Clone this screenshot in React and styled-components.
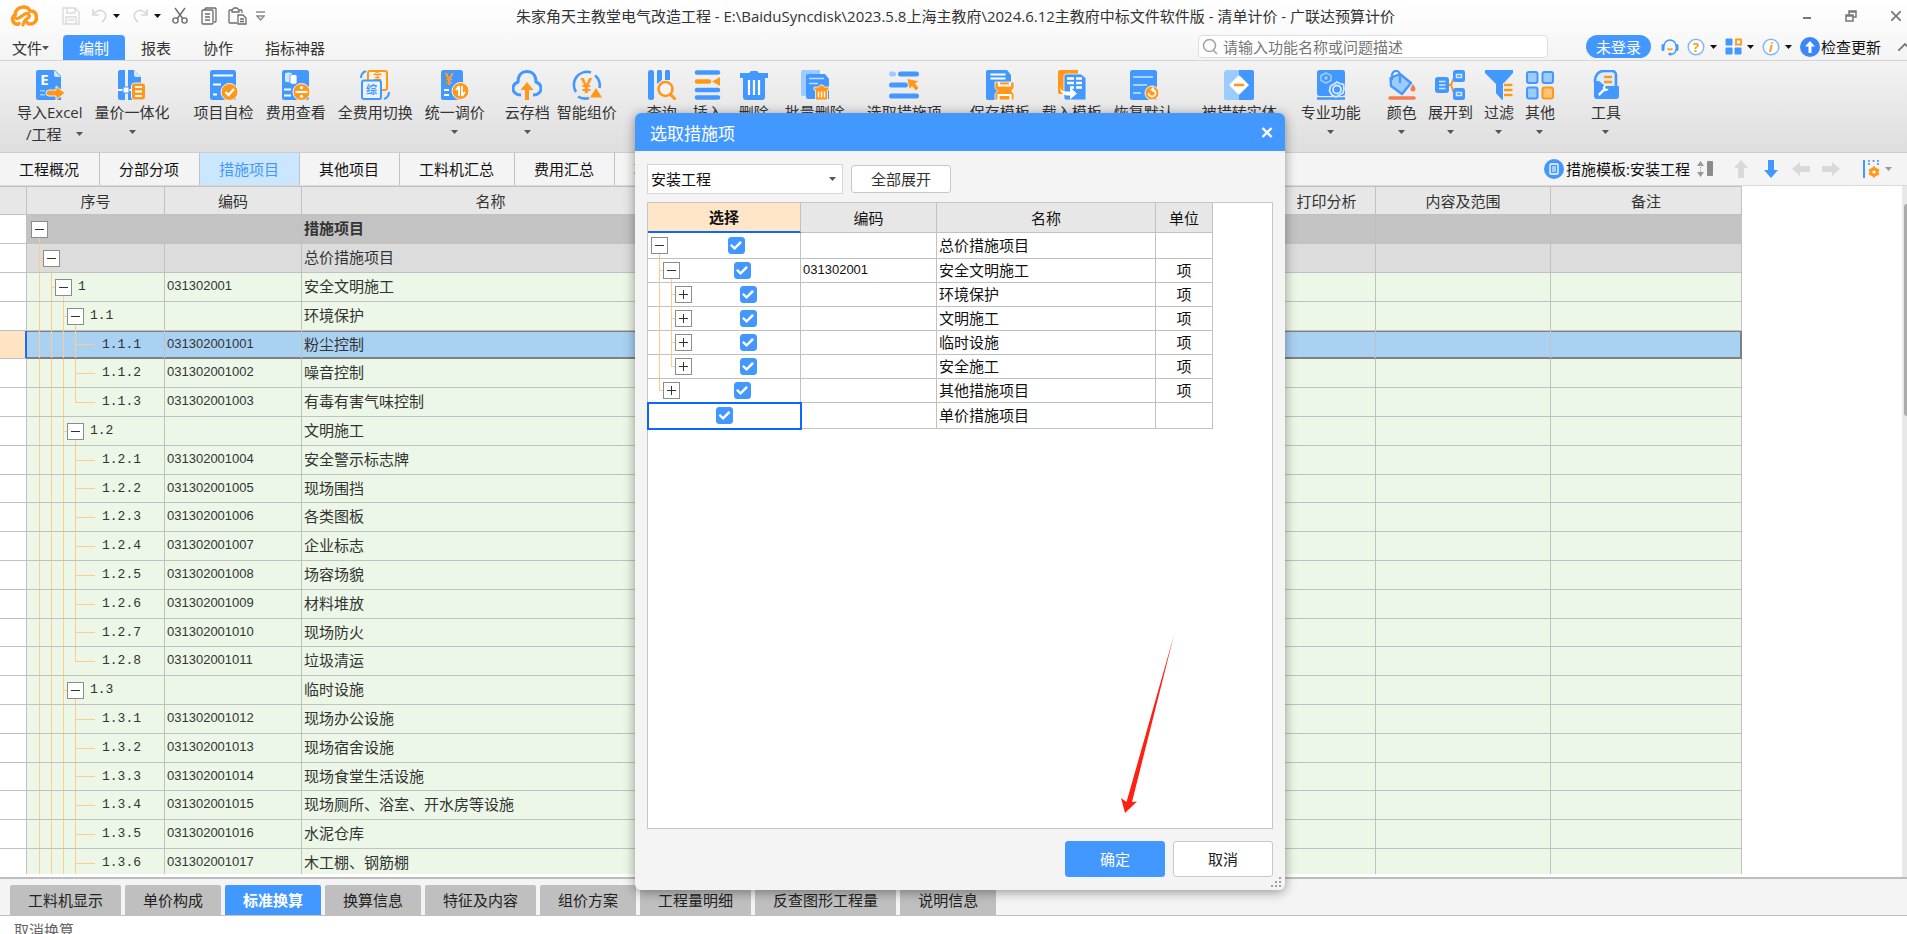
import React, { useState } from "react";
import styled, { createGlobalStyle, css } from "styled-components";

const BLUE = "#4398ff";
const ORANGE = "#ff981a";
const PALE = "#9ccbff";
const GUIDE = "#ffcb8f";
const LINE = "#c1c1c1";

// ribbon icons, all drawn on a 30 x 30 board
const icons = {
  excel: (
    <>
      <path d="M3 0h17l6 6v24H3a2 2 0 0 1-2-2V2a2 2 0 0 1 2-2z" fill={BLUE} />
      <path d="M19 0l7 7h-5a2 2 0 0 1-2-2z" fill="#d3e8ff" />
      <text x="9.500" y="15" fontSize="15" fontWeight="700" textAnchor="middle" fill="#fff">E</text>
      <path d="M5 20h5v1.500H5zM5 24h5v1.500H5z" fill={PALE} />
      <path d="M14 20h7v-4l9 7-9 7v-4h-7a3 3 0 0 1 0-6z" fill={ORANGE} stroke="#eee" strokeWidth="1" />
    </>
  ),
  quantity: (
    <>
      <path d="M3 0h5v30H3a2 2 0 0 1-2-2V2a2 2 0 0 1 2-2zM11 0h6l7 7v23H11z" fill={BLUE} />
      <path d="M17 0l7 7h-5a2 2 0 0 1-2-2z" fill="#d3e8ff" />
      <path d="M0 19h14v2H0z" fill="#fff" />
      <path d="M6 17h6v6H6z" fill="#fff" stroke={BLUE} strokeWidth="1" />
      <rect x="14.500" y="13" width="14" height="17" rx="3" fill={ORANGE} stroke="#eee" />
      <path d="M18 17h7M18 21.500h7M18 26h7" stroke="#fff" strokeWidth="1.800" />
    </>
  ),
  check: (
    <>
      <rect x="1" y="0" width="26" height="30" rx="2.500" fill={BLUE} />
      <path d="M4 5.500h20M4 14.500h8M4 24.500h4" stroke="#fff" strokeWidth="2.200" />
      <circle cx="20.500" cy="22" r="8.500" fill={ORANGE} stroke="#f5f5f5" />
      <path d="M16.500 22l3 3 5.500-6" stroke="#fff" strokeWidth="2.400" fill="none" />
    </>
  ),
  fee: (
    <>
      <rect x="1" y="0" width="27" height="30" rx="2.500" fill={BLUE} />
      <path d="M4 3.500c2-1.500 5-1.500 7 0v8c-2 1-5 1-7 0z" fill="#d3e8ff" />
      <path d="M9 5.500c2-1.500 5-1.500 7 0v8c-2 1-5 1-7 0z" fill="#fff" stroke={BLUE} strokeWidth=".8" />
      <path d="M3 19.500h7M3 25.500h7" stroke="#fff" strokeWidth="2.200" />
      <circle cx="20.500" cy="22" r="8.500" fill={ORANGE} stroke="#f5f5f5" />
      <path d="M14.500 22h12" stroke="#fff" strokeWidth="2.200" />
      <circle cx="20.500" cy="17.600" r="1.600" fill="#fff" />
      <circle cx="20.500" cy="26.400" r="1.600" fill="#fff" />
    </>
  ),
  switch: (
    <>
      <rect x="8" y="1" width="19" height="19" rx="2" fill="#fff3e2" stroke={ORANGE} strokeWidth="2" />
      <text x="17.500" y="8.500" fontSize="9" fontWeight="700" textAnchor="middle" fill={ORANGE}>全</text>
      <path d="M1 8c0-4 2-6 5-7M29 22c0 4-2 6-5 7" stroke={BLUE} strokeWidth="2" fill="none" />
      <rect x="2" y="10.500" width="19" height="18.500" rx="2" fill="#e9f4ff" stroke={BLUE} strokeWidth="2" />
      <text x="11.500" y="24" fontSize="11" fontWeight="700" textAnchor="middle" fill={BLUE}>综</text>
    </>
  ),
  price: (
    <>
      <rect x="1" y="0" width="22" height="30" rx="2.500" fill={BLUE} />
      <text x="8.500" y="15" fontSize="16" fontWeight="700" textAnchor="middle" fill={ORANGE}>¥</text>
      <path d="M4 20h5M4 25h5" stroke="#fff" strokeWidth="2" />
      <circle cx="20.500" cy="21" r="8.500" fill={ORANGE} stroke="#f5f5f5" />
      <path d="M19 16v10M19 16l-3 4M22 26V16M22 26l3-4" stroke="#fff" strokeWidth="2" fill="none" />
    </>
  ),
  cloud: (
    <>
      <path d="M9 25C4 25 1 22 1 18.500S3.500 13 6 12C6 5 10 1.500 15 1.500S24 5 24 12c2.500 1 5 3 5 6.500S26 25 21 25" fill="none" stroke={BLUE} strokeWidth="3" />
      <path d="M15 12l6.500 8H17v10h-4V20H8.500z" fill={ORANGE} />
    </>
  ),
  smart: (
    <>
      <path d="M4 22A13 13 0 0 1 19 2.500M23 5.500A13 13 0 0 1 27.500 18M6 26.500A13 13 0 0 0 17 28" fill="none" stroke={BLUE} strokeWidth="2.600" />
      <text x="14.500" y="22.500" fontSize="21" fontWeight="700" textAnchor="middle" fill={ORANGE}>¥</text>
      <path d="M24 18l6 9.500H18z" fill={ORANGE} />
    </>
  ),
  query: (
    <>
      <rect x="1" y="0" width="6" height="30" rx="2.500" fill={BLUE} />
      <path d="M10 2a2 2 0 0 1 5 0v8l-5 4zM18 2a2 2 0 0 1 5 0v8h-5z" fill={BLUE} />
      <circle cx="18.500" cy="19" r="7" fill="#f3f3f3" stroke={ORANGE} strokeWidth="2.600" />
      <path d="M23.500 24.500l5 5" stroke={ORANGE} strokeWidth="3" />
    </>
  ),
  insert: (
    <>
      <path d="M4 2.500h21M4 20h21M4 27.500h21" stroke={BLUE} strokeWidth="4.600" strokeLinecap="round" />
      <path d="M4 11.500h12" stroke={ORANGE} strokeWidth="4.600" strokeLinecap="round" />
      <path d="M27 7v9l-8-4.500z" fill={ORANGE} />
    </>
  ),
  trash: (
    <>
      <path d="M1 3h9l2-2h6l2 2h9v5H1z" fill={BLUE} />
      <path d="M4 8h22v19a3 3 0 0 1-3 3H7a3 3 0 0 1-3-3z" fill={BLUE} />
      <path d="M10 10v15M15 10v15M20 10v15" stroke="#fff" strokeWidth="2.200" />
    </>
  ),
  batch: (
    <>
      <path d="M2 0h18v26H2a2 2 0 0 1-1-2V2z" fill={PALE} />
      <path d="M8 4h17l4 5v20H8a2 2 0 0 1-2-2V6a2 2 0 0 1 2-2z" fill={BLUE} />
      <path d="M9 8.500h15M9 13.500h9" stroke="#bfddff" strokeWidth="1.600" />
      <path d="M14 17h5l1-2h3l1 2h5v3h-1.500v10h-12V20H14z" fill={ORANGE} stroke="#f5f5f5" strokeWidth=".8" />
      <path d="M18.500 21.500v6M21.500 21.500v6M24.500 21.500v6" stroke="#fff" strokeWidth="1.400" />
    </>
  ),
  pick: (
    <>
      <path d="M2.500 4h2" stroke={PALE} strokeWidth="5" strokeLinecap="round" />
      <path d="M11.500 4h16M2.500 15h14M2.500 26h25" stroke={BLUE} strokeWidth="5" strokeLinecap="round" />
      <path d="M18 8.500l12 2.500-3.500 2.500 3.500 4.500-3 3-4-4.500-2.500 3.500z" fill={ORANGE} stroke="#eee" strokeWidth=".8" />
    </>
  ),
  saveTpl: (
    <>
      <path d="M3 0h19l4 5v25H3a2 2 0 0 1-2-2V2a2 2 0 0 1 2-2z" fill={BLUE} />
      <path d="M5.500 4.500h15M5.500 8.500h15" stroke="#fff" strokeWidth="1.800" />
      <path d="M10 12h19v6l-2.500 3 2.500 3v6H10v-6l2.500-3-2.500-3z" fill={ORANGE} stroke="#f5f5f5" strokeWidth=".8" />
      <path d="M14 12v3.500h11V12M13.500 30v-5h12v5" stroke="#fff" strokeWidth="2.200" fill="none" />
    </>
  ),
  loadTpl: (
    <>
      <path d="M3 0h18v24H3a2 2 0 0 1-2-2V2a2 2 0 0 1 2-2z" fill={ORANGE} />
      <path d="M9 4h15l5 4v22H9a2 2 0 0 1-2-2V6a2 2 0 0 1 2-2z" fill={BLUE} stroke="#f5f5f5" strokeWidth=".8" />
      <path d="M10 8.500h7M19 8.500h6M10 13h7M19 13h6M13 17.500h4M19 17.500h6" stroke="#fff" strokeWidth="2.400" />
      <path d="M3 17c1 4 4 5 10 4.500v-4l7 6-7 6v-4C7 26 3 23 3 17z" fill="#fff" />
    </>
  ),
  restore: (
    <>
      <rect x="1" y="0" width="27" height="30" rx="2.500" fill={BLUE} />
      <path d="M4 7h20M4 15h14M4 23h8" stroke="#a9d2ff" strokeWidth="2.200" />
      <circle cx="23" cy="23" r="7" fill={ORANGE} stroke="#f5f5f5" />
      <path d="M19.500 23a3.500 3.500 0 1 0 3.500-3.500l1.500-2M23 19.500l2 2" stroke="#fff" strokeWidth="1.800" fill="none" />
    </>
  ),
  convert: (
    <>
      <path d="M2 0h13v30H2a2 2 0 0 1-2-2V2z" fill={PALE} />
      <path d="M15 0h13a2 2 0 0 1 2 2v26a2 2 0 0 1-2 2H15z" fill={BLUE} />
      <path d="M5 15l9-9a1.500 1.500 0 0 1 2 0l9 9-9 9a1.500 1.500 0 0 1-2 0z" fill="#fff" />
      <path d="M10 15h10" stroke={ORANGE} strokeWidth="2.600" />
    </>
  ),
  pro: (
    <>
      <rect x="1" y="0" width="28" height="26" rx="2.500" fill={BLUE} />
      <path d="M1 28.500h28" stroke={BLUE} strokeWidth="2.600" />
      <path d="M10 3l5 2.500v5L10 13l-5-2.500v-5z" fill="none" stroke={PALE} strokeWidth="1.600" />
      <circle cx="10" cy="8" r="1.800" fill={PALE} />
      <path d="M21 12l3 1.500 3.500 1 .5 4.500-1 4-3.500 2L20 27l-4-2-2.500-4 1-5 3.500-2z" fill={BLUE} stroke="#d6eaff" strokeWidth="1.800" />
      <circle cx="21" cy="19.500" r="4" fill="none" stroke="#d6eaff" strokeWidth="1.800" />
    </>
  ),
  color: (
    <>
      <path d="M13 4l11 9-9 11L4 16l-.5-8z" fill={PALE} stroke={BLUE} strokeWidth="2.400" strokeLinejoin="round" />
      <path d="M5 10V5a4 4 0 0 1 8 0v8" fill="none" stroke={BLUE} strokeWidth="2.200" />
      <path d="M26 14c2 3 2.500 4 2.500 5a2.500 2.500 0 0 1-5 0c0-1 .5-2 2.500-5z" fill="#f67c52" />
      <path d="M3 28h24" stroke="#f67c52" strokeWidth="3.600" strokeLinecap="round" />
    </>
  ),
  expand: (
    <>
      <path d="M13 15h3l3-7h3M16 15l3 8h3" fill="none" stroke={ORANGE} strokeWidth="2" />
      <rect x="0" y="7" width="14" height="16" rx="3" fill={BLUE} />
      <rect x="18" y="0" width="12" height="12" rx="2.500" fill={BLUE} />
      <rect x="18" y="18" width="12" height="12" rx="2.500" fill={BLUE} />
      <path d="M4 11.500h6.500M4 15h6.500M4 18.500h6.500M21.500 4.500h5v3h-5zM21.500 22.500h5v3h-5z" stroke="#cfe6ff" strokeWidth="1.500" fill="none" />
    </>
  ),
  filter: (
    <>
      <path d="M1 0h28v3L19 14v16l-7-7v-9L1 3z" fill={BLUE} />
      <path d="M19 13h10v14H19z" fill="#f0f0f0" />
      <path d="M20 15h8.500M20 20h8.500M20 25h8.500" stroke={ORANGE} strokeWidth="2.400" />
      <path d="M12 13h6v17l-6-7z" fill={BLUE} />
    </>
  ),
  other: (
    <>
      <rect x="2" y="2" width="10.500" height="11" rx="2" fill={PALE} stroke={BLUE} strokeWidth="2" />
      <rect x="17.500" y="2" width="10.500" height="11" rx="2" fill={PALE} stroke={BLUE} strokeWidth="2" />
      <rect x="2" y="17.500" width="10.500" height="11" rx="2" fill={PALE} stroke={BLUE} strokeWidth="2" />
      <rect x="17.500" y="17.500" width="10.500" height="11" rx="2" fill="#ffc57a" stroke={ORANGE} strokeWidth="2" />
    </>
  ),
  tools: (
    <>
      <path d="M4 12v-2C5 3 9 1 13 1h8a4 4 0 0 1 4 4v12" fill="#dcedff" stroke={BLUE} strokeWidth="2.600" />
      <path d="M13 7h8M13 12h8" stroke={ORANGE} strokeWidth="2.600" />
      <path d="M3 11h5l6 5h14v10a3 3 0 0 1-3 3H6a3 3 0 0 1-3-3z" fill={BLUE} />
      <path d="M7 24l5-5a3 3 0 0 1 3-4l-1 2.500 1.500 1.500 2-.5a3 3 0 0 1-4 2.500l-5 5z" fill="#fff" />
    </>
  ),
};

const ribbon = [
  { lead: 0, gap: 12, items: [["导入Excel", "excel", "/工程"], ["量价一体化", "quantity", true]] },
  {
    lead: 24,
    gap: 12,
    items: [["项目自检", "check"], ["费用查看", "fee"], ["全费用切换", "switch"], ["统一调价", "price", true]],
  },
  { lead: 20, gap: 7, items: [["云存档", "cloud", true], ["智能组价", "smart"]] },
  {
    lead: 30,
    gap: 16,
    items: [["查询", "query"], ["插入", "insert"], ["删除", "trash"], ["批量删除", "batch"]],
  },
  { lead: 22, gap: 12, items: [["选取措施项", "pick"]] },
  { lead: 28, gap: 12, items: [["保存模板", "saveTpl"], ["载入模板", "loadTpl"], ["恢复默认", "restore"]] },
  { lead: 28, gap: 12, items: [["被措转实体", "convert"]] },
  { lead: 24, gap: 12, items: [["专业功能", "pro", true]] },
  {
    lead: 26,
    gap: 11,
    items: [["颜色", "color", true], ["展开到", "expand", true], ["过滤", "filter", true], ["其他", "other", true]],
  },
  { lead: 36, gap: 12, items: [["工具", "tools", true]] },
];

const columns = [
  ["", 27],
  ["序号", 138],
  ["编码", 137],
  ["名称", 378],
  ["单位", 60],
  ["项目特征", 178],
  ["工程量", 90],
  ["综合单价", 90],
  ["综合合价", 90],
  ["取费专业", 90],
  ["打印分析", 98],
  ["内容及范围", 175],
  ["备注", 191],
];

const rows = [
  { level: 0, no: "", code: "", name: "措施项目", tone: "root" },
  { level: 1, no: "", code: "", name: "总价措施项目", tone: "group" },
  { level: 2, no: "1", code: "031302001", name: "安全文明施工" },
  { level: 3, no: "1.1", code: "", name: "环境保护" },
  { level: 4, no: "1.1.1", code: "031302001001", name: "粉尘控制", tone: "selected" },
  { level: 4, no: "1.1.2", code: "031302001002", name: "噪音控制" },
  { level: 4, no: "1.1.3", code: "031302001003", name: "有毒有害气味控制", last: true },
  { level: 3, no: "1.2", code: "", name: "文明施工" },
  { level: 4, no: "1.2.1", code: "031302001004", name: "安全警示标志牌" },
  { level: 4, no: "1.2.2", code: "031302001005", name: "现场围挡" },
  { level: 4, no: "1.2.3", code: "031302001006", name: "各类图板" },
  { level: 4, no: "1.2.4", code: "031302001007", name: "企业标志" },
  { level: 4, no: "1.2.5", code: "031302001008", name: "场容场貌" },
  { level: 4, no: "1.2.6", code: "031302001009", name: "材料堆放" },
  { level: 4, no: "1.2.7", code: "031302001010", name: "现场防火" },
  { level: 4, no: "1.2.8", code: "031302001011", name: "垃圾清运", last: true },
  { level: 3, no: "1.3", code: "", name: "临时设施" },
  { level: 4, no: "1.3.1", code: "031302001012", name: "现场办公设施" },
  { level: 4, no: "1.3.2", code: "031302001013", name: "现场宿舍设施" },
  { level: 4, no: "1.3.3", code: "031302001014", name: "现场食堂生活设施" },
  { level: 4, no: "1.3.4", code: "031302001015", name: "现场厕所、浴室、开水房等设施" },
  { level: 4, no: "1.3.5", code: "031302001016", name: "水泥仓库" },
  { level: 4, no: "1.3.6", code: "031302001017", name: "木工棚、钢筋棚" },
];

const measures = [
  { guides: [], open: true, name: "总价措施项目", unit: "", tall: true },
  { guides: ["tee"], open: true, code: "031302001", name: "安全文明施工", unit: "项" },
  { guides: ["pass", "tee"], name: "环境保护", unit: "项" },
  { guides: ["pass", "tee"], name: "文明施工", unit: "项" },
  { guides: ["pass", "tee"], name: "临时设施", unit: "项" },
  { guides: ["pass", "elbow"], name: "安全施工", unit: "项" },
  { guides: ["elbow"], name: "其他措施项目", unit: "项" },
  { leaf: true, name: "单价措施项目", unit: "", tall: true },
];

const pageTabs = ["工程概况", "分部分项", "措施项目", "其他项目", "工料机汇总", "费用汇总", "项目自检"];
const detailTabs = [
  "工料机显示",
  "单价构成",
  "标准换算",
  "换算信息",
  "特征及内容",
  "组价方案",
  "工程量明细",
  "反查图形工程量",
  "说明信息",
];

const Caret = ({ color = "#555" }) => (
  <svg width="7" height="4" viewBox="0 0 7 4" aria-hidden="true">
    <path d="M0 0h7L3.500 4z" fill={color} />
  </svg>
);

const guidesFor = (row) =>
  Array.from({ length: row.level }, (_, i) => {
    if (i < row.level - 1) return "pass";
    return row.last ? "elbow" : "tee";
  });

const QuickAccess = () => (
  <Quick>
    <svg width="28" height="22" viewBox="0 0 28 22" aria-label="广联达">
      <path
        d="M9 18.500c-1 1-2 1-3 .5A5 5 0 0 1 5 10C5.500 5 9 2 13.500 2c3.500 0 5.500 1.500 6.500 4 4-.5 6.500 2.500 6.500 6.500 0 4-3 6.500-6.500 6.500-1.500 0-2.500-.5-3-1.500"
        fill="none"
        stroke={ORANGE}
        strokeWidth="3.600"
        strokeLinecap="round"
      />
      <path d="M6 13.500c4 1 7-4.500 10-5 3-.5 4.500 2.500 2 4.500-2.500 1.500-4 2-5 7" fill="none" stroke={ORANGE} strokeWidth="3.200" strokeLinecap="round" />
    </svg>
    <QuickButton $lead={24} aria-label="保存">
      <svg width="18" height="18" viewBox="0 0 18 18" fill="none" stroke="#dadada" strokeWidth="1.400">
        <path d="M1 1h12l4 4v12H1zM5 1v5h8V1M4 17v-7h10v7M6 13h6" />
      </svg>
    </QuickButton>
    <QuickButton $lead={12} aria-label="撤销">
      <svg width="15" height="15" viewBox="0 0 15 15" fill="none" stroke="#d8d8d8" strokeWidth="1.600">
        <path d="M1 1v6h6M1 7c3-5 8-6 11-3s2 7-2 10" />
      </svg>
      <Caret color="#111" />
    </QuickButton>
    <QuickButton $lead={13} aria-label="重做">
      <svg width="15" height="15" viewBox="0 0 15 15" fill="none" stroke="#d8d8d8" strokeWidth="1.600">
        <path d="M14 1v6H8M14 7c-3-5-8-6-11-3s-2 7 2 10" />
      </svg>
      <Caret color="#111" />
    </QuickButton>
    <QuickButton $lead={11} aria-label="剪切">
      <svg width="16" height="17" viewBox="0 0 16 17" fill="none" stroke="#6c6c6c" strokeWidth="1.400">
        <path d="M3 1l8 11M13 1L5 12" />
        <circle cx="3.500" cy="13.500" r="2.600" />
        <circle cx="12.500" cy="13.500" r="2.600" />
      </svg>
    </QuickButton>
    <QuickButton $lead={13} aria-label="复制">
      <svg width="16" height="18" viewBox="0 0 16 18" fill="none" stroke="#6c6c6c" strokeWidth="1.300">
        <path d="M4 3V2a1 1 0 0 1 1-1h9a1 1 0 0 1 1 1v12a1 1 0 0 1-1 1h-1" />
        <rect x="1" y="3" width="11" height="14" rx="1" />
        <path d="M4 7h5M4 10h5M4 13h5" />
      </svg>
    </QuickButton>
    <QuickButton $lead={11} aria-label="粘贴">
      <svg width="19" height="18" viewBox="0 0 19 18" fill="none" stroke="#6c6c6c" strokeWidth="1.300">
        <path d="M9 16H2a1 1 0 0 1-1-1V4a1 1 0 0 1 1-1h2M11 3h2a1 1 0 0 1 1 1v2M4 5V3l2-2h3l2 2v2z" />
        <path d="M10 8h5l3 3v6h-8zM12 12h4M12 14.500h4" />
      </svg>
    </QuickButton>
    <QuickButton $lead={9} aria-label="自定义快速访问">
      <svg width="9" height="10" viewBox="0 0 9 10" fill="none" stroke="#8a8a8a" strokeWidth="1.400">
        <path d="M0 1h9M1 5h7L4.500 9z" />
      </svg>
    </QuickButton>
  </Quick>
);

const HeaderTools = () => (
  <Tools>
    <Search>
      <svg width="17" height="17" viewBox="0 0 17 17" fill="none" stroke="#a5a5a5" strokeWidth="1.600">
        <circle cx="7.500" cy="7.500" r="6" />
        <path d="M11.500 12.500l3.500 3.500" />
      </svg>
      <SearchInput aria-label="功能搜索" placeholder="请输入功能名称或问题描述" />
    </Search>
    <Login>未登录</Login>
    <ToolButton aria-label="客服">
      <svg width="18" height="18" viewBox="0 0 18 18" fill="none">
        <path d="M3 8a6 6 0 0 1 12 0M15 11c0 3-2 5-5 5.500" stroke={BLUE} strokeWidth="1.400" />
        <path d="M2 7.500v4M16 7.500v4" stroke={BLUE} strokeWidth="3" strokeLinecap="round" />
        <path d="M6.500 10.500c1 1.500 4 1.500 5 0" stroke={ORANGE} strokeWidth="1.600" />
        <circle cx="9" cy="16" r="1.600" fill={BLUE} />
      </svg>
    </ToolButton>
    <ToolButton aria-label="帮助">
      <svg width="18" height="18" viewBox="0 0 18 18">
        <circle cx="9" cy="9" r="7.800" fill="#fff" stroke="#7fb8ff" strokeWidth="1.500" />
        <text x="9" y="14" textAnchor="middle" fontSize="13" fontWeight="700" fill={ORANGE}>?</text>
      </svg>
      <Caret color="#111" />
    </ToolButton>
    <ToolButton aria-label="应用">
      <svg width="17" height="17" viewBox="0 0 17 17">
        <path d="M1 1h6v6H1zM1 10h6v6H1zM10 10h6v6h-6z" fill={BLUE} stroke={BLUE} strokeLinejoin="round" />
        <path d="M11 1.500h5v5h-5z" fill="#fff" stroke={ORANGE} strokeWidth="1.800" />
      </svg>
      <Caret color="#111" />
    </ToolButton>
    <ToolButton aria-label="关于">
      <svg width="18" height="18" viewBox="0 0 18 18">
        <circle cx="9" cy="9" r="7.800" fill="#fff" stroke="#7fb8ff" strokeWidth="1.500" />
        <text x="9" y="14" textAnchor="middle" fontSize="13" fontWeight="700" fontStyle="italic" fill={ORANGE}>i</text>
      </svg>
      <Caret color="#111" />
    </ToolButton>
    <UpdateButton>
      <svg width="20" height="20" viewBox="0 0 20 20">
        <circle cx="10" cy="10" r="10" fill="#3b86fb" />
        <path d="M10 4l5 5.500h-3.500V16h-3V9.500H5z" fill="#fff" />
      </svg>
      检查更新
    </UpdateButton>
    <Collapse aria-label="收起功能区">
      <svg width="9" height="8" viewBox="0 0 9 8" fill="none" stroke="#777" strokeWidth="1.800">
        <path d="M0 8l7-7 7 7" />
      </svg>
    </Collapse>
  </Tools>
);

const Tree = ({ guides, state, children }) => (
  <TreeLine>
    {guides.map((kind, i) => (
      <Guide key={i} $kind={kind} />
    ))}
    <Node $kind={state}>
      {state !== "leaf" && <Expander $open={state === "open"} aria-label={state === "open" ? "折叠" : "展开"} />}
    </Node>
    {children}
  </TreeLine>
);

const MeasureDialog = ({ onClose }) => {
  const [checked, setChecked] = useState(measures.map(() => true));
  const toggle = (idx) => setChecked(checked.map((c, i) => (i === idx ? !c : c)));

  return (
    <Dialog role="dialog" aria-labelledby="dialog-title">
      <DialogHead>
        <DialogTitle id="dialog-title">选取措施项</DialogTitle>
        <CloseButton aria-label="关闭" onClick={onClose}>
          <svg width="12" height="11" viewBox="0 0 12 11" stroke="#fff" strokeWidth="2.400">
            <path d="M1.500 1l9 9M10.500 1l-9 9" />
          </svg>
        </CloseButton>
      </DialogHead>
      <DialogBody>
        <FilterBar>
          <SelectBox>
            <Select aria-label="专业" defaultValue="安装工程">
              <option>安装工程</option>
              <option>建筑工程</option>
            </Select>
            <Caret />
          </SelectBox>
          <ExpandAll>全部展开</ExpandAll>
        </FilterBar>
        <PickBox>
          <PickTable>
            <colgroup>
              <Col $w={153} />
              <Col $w={136} />
              <Col $w={219} />
              <Col $w={57} />
            </colgroup>
            <thead>
              <tr>
                <PickHead $active>选择</PickHead>
                <PickHead>编码</PickHead>
                <PickHead>名称</PickHead>
                <PickHead>单位</PickHead>
              </tr>
            </thead>
            <tbody>
              {measures.map((m, idx) => (
                <PickRow key={m.name} $tall={m.tall}>
                  <CheckCell $focus={m.leaf}>
                    <CheckLine>
                      {!m.leaf && <Tree guides={m.guides} state={m.open ? "open" : "closed"} />}
                      <CheckSlot $gap={!m.leaf}>
                        <Check
                          type="checkbox"
                          aria-label={m.name}
                          checked={checked[idx]}
                          onChange={() => toggle(idx)}
                        />
                      </CheckSlot>
                    </CheckLine>
                  </CheckCell>
                  <PickCell $code>{m.code}</PickCell>
                  <PickCell>{m.name}</PickCell>
                  <PickCell $center>{m.unit}</PickCell>
                </PickRow>
              ))}
            </tbody>
          </PickTable>
        </PickBox>
        <DialogFoot>
          <DialogButton $primary onClick={onClose}>
            确定
          </DialogButton>
          <DialogButton onClick={onClose}>取消</DialogButton>
        </DialogFoot>
      </DialogBody>
      <Grip width="12" height="10" viewBox="0 0 12 10" fill="#a0a0a0">
        <path d="M8 0h2v2H8zM8 4h2v2H8zM4 4h2v2H4zM8 8h2v2H8zM4 8h2v2H4zM0 8h2v2H0z" />
      </Grip>
      <Pointer width="56" height="180" viewBox="0 0 56 180">
        <path d="M54 1L6.500 168 1 164l4 15 12-11.500-5 .5z" fill="#ff2012" />
      </Pointer>
    </Dialog>
  );
};

const App = () => {
  const [open, setOpen] = useState(true);

  return (
    <Page>
      <GlobalStyle />
      <TitleBar>
        <QuickAccess />
        <Title>
          朱家角天主教堂电气改造工程 - E:\BaiduSyncdisk\2023.5.8上海主教府\2024.6.12主教府中标文件软件版 - 清单计价 -
          广联达预算计价
        </Title>
        <WindowButtons>
          <WindowButton aria-label="最小化">
            <svg width="8" height="11" viewBox="0 0 8 11">
              <path d="M0 7h8v2H0z" fill="#777" />
            </svg>
          </WindowButton>
          <WindowButton aria-label="还原">
            <svg width="12" height="12" viewBox="0 0 12 12" fill="none" stroke="#777" strokeWidth="1.500">
              <path d="M1 5h7v6H1zM1 6h7M4 5V1h7v6H8M4 2h7" />
            </svg>
          </WindowButton>
          <WindowButton aria-label="关闭窗口">
            <svg width="10" height="10" viewBox="0 0 10 10" stroke="#777" strokeWidth="1.700">
              <path d="M0 0l10 10M10 0L0 10" />
            </svg>
          </WindowButton>
        </WindowButtons>
      </TitleBar>

      <MenuBar>
        <FileMenu>
          文件
          <Caret />
        </FileMenu>
        <Menu $active>编制</Menu>
        <Menu>报表</Menu>
        <Menu>协作</Menu>
        <Menu>指标神器</Menu>
        <HeaderTools />
      </MenuBar>

      <Ribbon>
        {ribbon.map((group) => (
          <RibbonGroup key={group.items[0][0]} $lead={group.lead} $gap={group.gap}>
            {group.items.map(([label, icon, more]) => (
              <RibbonButton key={label} onClick={icon === "pick" ? () => setOpen(true) : undefined}>
                <svg width="30" height="30" viewBox="0 0 30 30" aria-hidden="true">
                  {icons[icon]}
                </svg>
                <span>{label}</span>
                {more && (
                  <More $split={more !== true}>
                    {more !== true && <span>{more}</span>}
                    <Caret />
                  </More>
                )}
              </RibbonButton>
            ))}
          </RibbonGroup>
        ))}
      </Ribbon>

      <TabBar>
        {pageTabs.map((tab) => (
          <PageTab key={tab} $active={tab === "措施项目"}>
            {tab}
          </PageTab>
        ))}
        <TabTools>
          <Template>
            <svg width="20" height="20" viewBox="0 0 20 20">
              <circle cx="10" cy="10" r="10" fill={BLUE} />
              <rect x="6" y="5" width="8" height="10" rx="1" fill="none" stroke="#fff" strokeWidth="1.300" />
              <path d="M8 8h4M8 10h4M8 12h4" stroke="#fff" />
            </svg>
            措施模板:安装工程
          </Template>
          <ToolButton aria-label="行高">
            <svg width="17" height="16" viewBox="0 0 17 16" fill="#999">
              <path d="M3.500 0L7 5H0zM3.500 16L7 11H0zM3 6h1v1.500H3zM3 9h1v1.500H3z" />
              <rect x="10" y="0" width="6" height="15" rx="1" fill="#8b8b8b" />
            </svg>
          </ToolButton>
          <Moves>
            <ToolButton aria-label="上移">
              <svg width="18" height="18" viewBox="0 0 18 18">
                <path d="M9 0l7 8h-4v10H6V8H2z" fill="#d9d9d9" />
              </svg>
            </ToolButton>
            <ToolButton aria-label="下移">
              <svg width="18" height="18" viewBox="0 0 18 18">
                <path d="M9 18l7-8h-4V0H6v10H2z" fill={BLUE} />
              </svg>
            </ToolButton>
            <ToolButton aria-label="升级">
              <svg width="18" height="18" viewBox="0 0 18 18">
                <path d="M0 9l8-7v4h10v6H8v4z" fill="#d9d9d9" />
              </svg>
            </ToolButton>
            <ToolButton aria-label="降级">
              <svg width="18" height="18" viewBox="0 0 18 18">
                <path d="M18 9l-8-7v4H0v6h10v4z" fill="#d9d9d9" />
              </svg>
            </ToolButton>
          </Moves>
          <ToolButton aria-label="列设置">
            <svg width="17" height="18" viewBox="0 0 17 18">
              <path d="M1 0v18" stroke={BLUE} strokeWidth="2" />
              <path d="M6 0v6M10.500 0v3M15 0v5" stroke={BLUE} strokeWidth="1.600" strokeDasharray="2 1" />
              <circle cx="11" cy="12" r="3.200" fill="none" stroke={ORANGE} strokeWidth="3" />
              <path d="M11 6.500v11M6 9.500l10 5M6 14.500l10-5" stroke={ORANGE} strokeWidth="2" />
              <circle cx="11" cy="12" r="1.600" fill="#fff" />
            </svg>
            <Caret color="#999" />
          </ToolButton>
        </TabTools>
      </TabBar>

      <GridArea>
        <GridScroll>
          <GridTable>
            <colgroup>
              {columns.map(([name, width]) => (
                <Col key={name} $w={width} />
              ))}
            </colgroup>
            <thead>
              <tr>
                {columns.map(([name]) => (
                  <HeadCell key={name}>{name}</HeadCell>
                ))}
              </tr>
            </thead>
            <tbody>
              {rows.map((row, idx) => (
                <GridRow key={idx} $tone={row.tone}>
                  <RowHead $current={row.tone === "selected"} />
                  <TreeCell>
                    <Tree guides={guidesFor(row)} state={row.level === 4 ? "leaf" : "open"}>
                      <Seq>{row.no}</Seq>
                    </Tree>
                  </TreeCell>
                  <CodeCell>{row.code}</CodeCell>
                  <Cell>{row.name}</Cell>
                  {columns.slice(4).map(([name]) => (
                    <Cell key={name} />
                  ))}
                </GridRow>
              ))}
            </tbody>
          </GridTable>
        </GridScroll>
        <ScrollTrack>
          <ScrollThumb />
        </ScrollTrack>
      </GridArea>

      <DetailBar>
        {detailTabs.map((tab) => (
          <DetailTab key={tab} $active={tab === "标准换算"}>
            {tab}
          </DetailTab>
        ))}
      </DetailBar>
      <DetailBody>取消换算</DetailBody>

      {open && <MeasureDialog onClose={() => setOpen(false)} />}
    </Page>
  );
};

const GlobalStyle = createGlobalStyle`
  * {
    box-sizing: border-box;
  }
  body {
    margin: 0;
    overflow: hidden;
    font: 15px/20px "Open Sans", "Noto Sans CJK SC", sans-serif;
    color: #333;
  }
  button, input, select {
    font: inherit;
    color: inherit;
    margin: 0;
    padding: 0;
    border: none;
    background: none;
  }
  button {
    white-space: nowrap;
    cursor: pointer;
  }
  svg {
    display: block;
    flex: none;
  }
`;

const Page = styled.div`
  position: relative;
  display: flex;
  flex-direction: column;
  height: 100vh;
  overflow: hidden;
  background: #fff;
`;

const TitleBar = styled.header`
  display: grid;
  grid-template-columns: 1fr auto 1fr;
  align-items: center;
  height: 35px;
  padding: 0 6px 4px 10px;
  background: linear-gradient(#fff, #f9f9f9);
`;

const Quick = styled.div`
  display: flex;
  align-items: center;
`;

const QuickButton = styled.button`
  display: flex;
  align-items: center;
  gap: 6px;
  margin-left: ${(props) => props.$lead}px;
`;

const Title = styled.h1`
  margin: 0;
  font-size: 15px;
  font-weight: 400;
  line-height: 20px;
  white-space: nowrap;
`;

const WindowButtons = styled.div`
  display: flex;
  justify-content: flex-end;
  gap: 34px;
`;

const WindowButton = styled.button`
  display: flex;
  align-items: center;
`;

const MenuBar = styled.nav`
  display: flex;
  height: 26px;
  border-bottom: 1px solid #d6d6d6;
  background: linear-gradient(#f9f9f9, #f3f3f3);
`;

const FileMenu = styled.button`
  display: flex;
  align-items: center;
  width: 63px;
  padding-left: 12px;
`;

const Menu = styled.button`
  padding: 0 16px;
  border-radius: 4px 4px 0 0;
  color: ${(props) => (props.$active ? "#fff" : "#333")};
  background: ${(props) => (props.$active ? BLUE : "none")};
`;

const Tools = styled.div`
  display: flex;
  align-items: center;
  gap: 8px;
  height: 23px;
  margin-left: auto;
`;

const Search = styled.label`
  display: flex;
  align-items: center;
  gap: 4px;
  width: 350px;
  height: 23px;
  margin-right: 30px;
  padding-left: 3px;
  border: 1px solid #dedede;
  border-radius: 4px;
  background: #fff;
`;

const SearchInput = styled.input`
  flex: 1;
  outline: none;
  &::placeholder {
    color: #757575;
    opacity: 1;
  }
`;

const Login = styled.button`
  width: 65px;
  height: 23px;
  margin-right: 2px;
  border-radius: 12px;
  color: #fff;
  background: ${BLUE};
`;

const ToolButton = styled.button`
  display: flex;
  align-items: center;
  gap: 5px;
`;

const UpdateButton = styled(ToolButton)`
  gap: 1px;
  color: #111;
`;

const Collapse = styled(ToolButton)`
  margin-left: 9px;
`;

const Ribbon = styled.div`
  display: flex;
  height: 92px;
  padding: 9px 0 0 17px;
  border-bottom: 1px solid #cdcdcd;
  background: linear-gradient(#f3f3f3, #dedede);
`;

const RibbonGroup = styled.div`
  display: flex;
  gap: ${(props) => props.$gap}px;
  margin-left: ${(props) => props.$lead}px;
`;

const RibbonButton = styled.button`
  display: flex;
  flex-direction: column;
  align-items: center;
  gap: 2px;
`;

const More = styled.div`
  display: flex;
  align-items: center;
  align-self: stretch;
  justify-content: ${(props) => (props.$split ? "flex-end" : "center")};
  gap: 14px;
  height: ${(props) => (props.$split ? 20 : 16)}px;
`;

const TabBar = styled.div`
  display: flex;
  height: 33px;
  border-bottom: 1px solid #d9d9d9;
  background: #f4f4f4;
`;

const PageTab = styled.button`
  padding: 0 21px 0 19px;
  color: ${(props) => (props.$active ? BLUE : "#111")};
  background: ${(props) => (props.$active ? "#cbe6ff" : "none")};
  box-shadow: inset -1px 0 ${LINE};
`;

const TabTools = styled.div`
  display: flex;
  align-items: center;
  gap: 7px;
  margin-left: auto;
  padding-right: 15px;
`;

const Template = styled(ToolButton)`
  gap: 2px;
  color: #111;
`;

const Moves = styled.div`
  display: flex;
  gap: 12px;
  padding: 0 16px 0 11px;
`;

const GridArea = styled.main`
  display: flex;
  flex: 1;
  min-height: 0;
`;

const GridScroll = styled.div`
  flex: 1;
  overflow: hidden;
  border-bottom: 3px solid #fff;
`;

const ScrollTrack = styled.div`
  width: 5px;
  padding: 18px 0 0 2px;
  background: #e8e8e8;
`;

const ScrollThumb = styled.div`
  height: 212px;
  border-radius: 3px 0 0 3px;
  background: #ababab;
`;

const GridTable = styled.table`
  width: 1742px;
  table-layout: fixed;
  border-spacing: 0;
`;

const Col = styled.col`
  width: ${(props) => props.$w}px;
`;

const HeadCell = styled.th`
  height: 29px;
  padding: 0;
  border: solid ${LINE};
  border-width: 1px 1px 1px 0;
  font-weight: 400;
  background: #e7e7e7;
`;

const Cell = styled.td`
  padding: 0 2px 2px;
  border: solid ${LINE};
  border-width: 0 1px 1px 0;
  white-space: nowrap;
`;

const CodeCell = styled(Cell)`
  font-family: "Liberation Sans", sans-serif;
  font-size: 13px;
`;

const TreeCell = styled(Cell)`
  padding: 0 0 0 4px;
`;

const RowHead = styled(Cell)`
  &&& {
    border-color: ${LINE};
    border-right-color: ${(props) => (props.$current ? "#1b6df0" : LINE)};
    background: ${(props) => (props.$current ? "#ffe4c4" : "#fff")};
    box-shadow: ${(props) => (props.$current ? "inset -1px 0 #1b6df0" : "none")};
  }
`;

const tones = {
  root: css`
    background: #c3c3c3;
    font-weight: 700;
  `,
  group: css`
    background: #dcdcdc;
  `,
  selected: css`
    background: #a9d1f2;
    ${Cell} {
      border-bottom-color: #808080;
      box-shadow: inset 0 1px #808080, inset 0 -1px #808080;
    }
    ${Cell}:last-child {
      border-right-color: #808080;
      box-shadow: inset 0 1px #808080, inset -1px -1px #808080;
    }
  `,
};

const GridRow = styled.tr`
  height: 29px;
  background: #ecf7e7;
  ${(props) => tones[props.$tone]}
  &:nth-child(5n) {
    height: 28px;
  }
  ${TreeCell} {
    height: 1px;
  }
`;

const TreeLine = styled.div`
  display: flex;
  align-items: center;
  height: 100%;
`;

const stroke = `linear-gradient(${GUIDE}, ${GUIDE})`;

const guideLines = {
  pass: `${stroke} 8px 0 / 1px 100% no-repeat`,
  tee: `${stroke} 8px 0 / 1px 100% no-repeat, ${stroke} 8px 50% / 4px 1px no-repeat`,
  elbow: `${stroke} 8px 0 / 1px 50% no-repeat, ${stroke} 8px 50% / 4px 1px no-repeat`,
};

const nodeLines = {
  open: `${stroke} 8px 100% / 1px 50% no-repeat`,
  closed: "none",
  leaf: `${stroke} 0 50% / 16px 1px no-repeat`,
};

const Guide = styled.span`
  align-self: stretch;
  flex: none;
  width: 12px;
  background: ${(props) => guideLines[props.$kind]};
`;

const Node = styled.span`
  display: flex;
  align-items: center;
  align-self: stretch;
  flex: none;
  width: 17px;
  background: ${(props) => nodeLines[props.$kind]};
`;

const ink = "linear-gradient(#333, #333)";

const Expander = styled.button`
  width: 17px;
  height: 17px;
  border: 1px solid #8c8c8c;
  background: ${(props) => (props.$open ? "" : `${ink} center / 1px 9px no-repeat,`)} ${ink} center / 9px 1px
    no-repeat, #fff;
`;

const Seq = styled.span`
  margin-left: 6px;
  font-family: "Liberation Mono", monospace;
  font-size: 13px;
`;

const DetailBar = styled.div`
  display: flex;
  gap: 4px;
  padding: 6px 0 0 10px;
  border-top: 2px solid #bdbdbd;
  border-bottom: 1px solid ${LINE};
  background: #f4f4f4;
`;

const DetailTab = styled.button`
  height: 30px;
  padding: 0 18px;
  border-radius: 2px 2px 0 0;
  color: ${(props) => (props.$active ? "#fff" : "#222")};
  font-weight: ${(props) => (props.$active ? 700 : 400)};
  background: ${(props) => (props.$active ? BLUE : "#bfbfbf")};
`;

const DetailBody = styled.div`
  height: 18px;
  padding-left: 14px;
  line-height: 28px;
  color: #666;
  overflow: hidden;
`;

const Dialog = styled.section`
  position: absolute;
  top: 113px;
  left: 635px;
  display: flex;
  flex-direction: column;
  width: 650px;
  height: 777px;
  border-radius: 6px;
  background: #f4f4f4;
  box-shadow: 0 2px 12px rgba(0, 0, 0, 0.4);
`;

const DialogHead = styled.header`
  display: flex;
  align-items: center;
  justify-content: space-between;
  height: 38px;
  padding: 4px 12px 0 15px;
  border-radius: 6px 6px 0 0;
  color: #fff;
  background: ${BLUE};
`;

const DialogTitle = styled.h2`
  margin: 0;
  font-size: 17px;
  font-weight: 400;
`;

const CloseButton = styled.button`
  padding-bottom: 4px;
`;

const DialogBody = styled.div`
  display: flex;
  flex-direction: column;
  flex: 1;
  padding: 13px 12px;
`;

const FilterBar = styled.div`
  display: flex;
  align-items: center;
  gap: 8px;
  margin-bottom: 8px;
`;

const SelectBox = styled.div`
  display: grid;
  align-items: center;
  width: 196px;
  height: 30px;
  border: 1px solid #d5d5d5;
  background: #fff;
  & > * {
    grid-area: 1 / 1;
  }
  & > svg {
    justify-self: end;
    margin-right: 6px;
    pointer-events: none;
  }
`;

const Select = styled.select`
  height: 28px;
  padding-left: 3px;
  appearance: none;
  color: #111;
`;

const ExpandAll = styled.button`
  width: 100px;
  height: 28px;
  border: 1px solid #c8c8c8;
  border-radius: 3px;
  background: #fff;
`;

const PickBox = styled.div`
  flex: 1;
  margin-bottom: 12px;
  border: 1px solid #c6c6c6;
  background: #fff;
`;

const PickTable = styled.table`
  width: 565px;
  table-layout: fixed;
  border-spacing: 0;
  color: #111;
`;

const PickHead = styled.th`
  height: 30px;
  padding: 0;
  border: solid ${LINE};
  border-width: 0 1px 1px 0;
  font-weight: ${(props) => (props.$active ? 700 : 400)};
  background: ${(props) => (props.$active ? "#ffe6c9" : "#e7e7e7")};
  ${(props) => props.$active && "border-bottom: 2px solid #0b68ff;"}
`;

const PickRow = styled.tr`
  height: ${(props) => (props.$tall ? 26 : 24)}px;
`;

const PickCell = styled.td`
  padding: 0 2px 2px;
  border: solid ${LINE};
  border-width: 0 1px 1px 0;
  text-align: ${(props) => (props.$center ? "center" : "left")};
  ${(props) =>
    props.$code &&
    css`
      font-family: "Liberation Sans", sans-serif;
      font-size: 13px;
    `}
`;

const CheckCell = styled(PickCell)`
  height: 1px;
  padding: 0;
  ${(props) => props.$focus && "outline: 2px solid #0b68ff; outline-offset: -1px;"}
`;

const CheckLine = styled.div`
  display: flex;
  align-items: center;
  height: 100%;
  padding: 0 2px 0 3px;
`;

const CheckSlot = styled.div`
  display: flex;
  flex: 1;
  justify-content: center;
  margin-left: ${(props) => (props.$gap ? 6 : 0)}px;
`;

const Check = styled.input`
  display: grid;
  place-content: center;
  width: 17px;
  height: 17px;
  border-radius: 3px;
  appearance: none;
  border: 1px solid ${BLUE};
  background: #fff;
  &:checked {
    background: ${BLUE};
  }
  &:checked::before {
    content: "";
    width: 12px;
    height: 10px;
    background: #fff;
    clip-path: polygon(0 50%, 14% 34%, 38% 62%, 84% 6%, 100% 22%, 38% 96%);
  }
`;

const DialogFoot = styled.footer`
  display: flex;
  justify-content: flex-end;
  gap: 8px;
`;

const DialogButton = styled.button`
  width: 100px;
  height: 36px;
  border: 1px solid ${(props) => (props.$primary ? BLUE : "#c8c8c8")};
  border-radius: 3px;
  color: ${(props) => (props.$primary ? "#fff" : "#222")};
  background: ${(props) => (props.$primary ? BLUE : "#fff")};
`;

const Grip = styled.svg`
  position: absolute;
  right: 2px;
  bottom: 3px;
`;

const Pointer = styled.svg`
  position: absolute;
  right: 109px;
  bottom: 76px;
  pointer-events: none;
`;

export default App;
